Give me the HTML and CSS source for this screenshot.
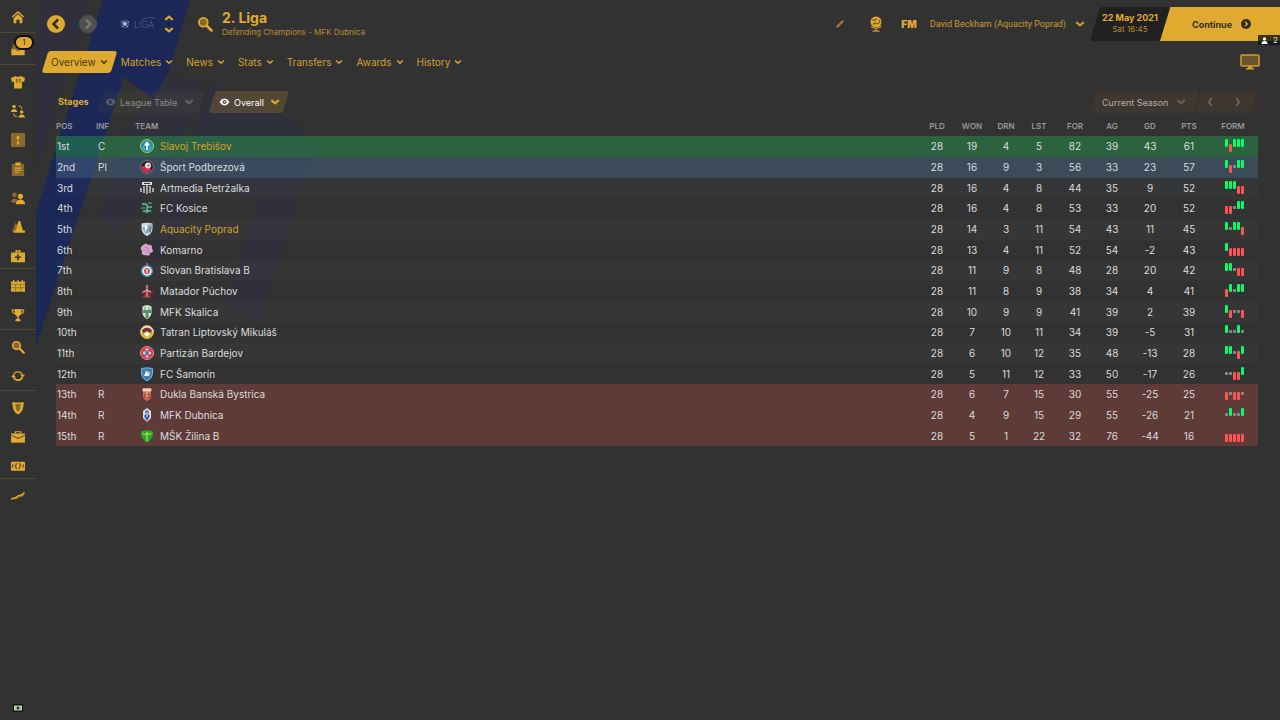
FILE: index.html
```html
<!DOCTYPE html>
<html lang="en">
<head>
    <meta charset="UTF-8">
    <meta name="viewport" content="width=device-width, initial-scale=1.0">
    <title>2. Liga - Overview</title>
    <link rel="stylesheet" href="styles.css">
</head>
<body>
    <!-- club colours behind the page -->
    <svg class="backdrop" width="420" height="360" aria-hidden="true">
        <path class="faint" d="M45 0h45L36 170V40zM172 75l36 10-40 85-50 62-20-14 30-95zM210 82l90 42 14 26-56 176-34-22 40-118-16 14-44-22-28 60-30 32 40-122z"/>
        <path class="band" d="M103 0h87l-22 73-15 26-29-22L36 346V212z"/>
    </svg>

    <!-- shared icons -->
    <svg class="sprite" aria-hidden="true">
        <symbol id="search" viewBox="0 0 16 16"><circle cx="6.300" cy="6.300" r="4.400" fill="#8a682c" stroke="#e0aa30" stroke-width="1.800"/><path d="M10 10l4.500 4.500" stroke="#e0aa30" stroke-width="2.600" stroke-linecap="round"/></symbol>
        <symbol id="down" viewBox="0 0 8 6"><path d="M1 1.500l3 2.600 3-2.600" fill="none" stroke="currentColor" stroke-width="1.600"/></symbol>
        <symbol id="eye" viewBox="0 0 12 8"><path fill-rule="evenodd" d="M0.500 4Q3 .2 6 .2T11.500 4Q9 7.800 6 7.800T.500 4zM6 1.900a2.100 2.100 0 1 0 .01 0z" fill="currentColor"/><circle cx="6" cy="4" r=".8" fill="currentColor"/></symbol>
    </svg>

    <nav class="sidebar" aria-label="Main">
        <div class="group">
            <a href="#" aria-label="Home"><svg viewBox="0 0 16 16"><path d="M8 1l7 6.300-1.200 1.300L8 3.500 2.200 8.600 1 7.300z"/><path d="M3 9.200l5-4.400 5 4.400V15H9.800v-4H6.200v4H3z"/></svg></a>
        </div>
        <div class="group tall">
            <a href="#" aria-label="Inbox"><svg viewBox="0 0 16 16"><path d="M3 1h10l2.500 6v6H.5V7z" class="dim"/><path d="M.5 7H5l1.500 2h3L11 7h4.500v7H.5z"/></svg><span class="badge">1</span></a>
        </div>
        <div class="group">
            <a href="#" aria-label="Squad"><svg viewBox="0 0 16 16"><path d="M5 1q3 2 6 0l5 2.500-1 4.500-2.500-.5V15.500h-9V7.500L1 8 0 3.500z"/><path d="M5.500 5.500l1.200-.8V9M9 5.500l1.200-.8V9" fill="none" stroke="#4a3c20"/></svg></a>
            <a href="#" aria-label="Dynamics"><svg viewBox="0 0 16 16"><circle cx="3.500" cy="2.800" r="2"/><path d="M0 9c0-4.500 7-4.500 7 0z"/><circle cx="12.200" cy="9" r="2"/><path d="M8.500 15.500c0-4.500 7.500-4.500 7.500 0z"/><path d="M8.500 2q4 .3 4 4M3 10.500q0 3.500 4 4" fill="none" stroke="#a47c2d" stroke-width="1.600"/></svg></a>
            <a href="#" aria-label="Tactics"><svg viewBox="0 0 16 16"><rect x="0" y="0" width="16" height="16" rx="1" class="dim"/><path d="M8 2.500L10.500 6H9v2H7V6H5.500zM7 9.500h2.200v3.500H7z"/></svg></a>
            <a href="#" aria-label="Team report"><svg viewBox="0 0 16 16"><rect x="1" y="2" width="14" height="14" rx="1" class="dim"/><path d="M5 .5h6V4H5z"/><path d="M4 7h8M4 9.500h8M4 12h5" stroke="#e0aa30" stroke-width="1.200"/></svg></a>
            <a href="#" aria-label="Staff"><svg viewBox="0 0 16 16"><g class="dim"><circle cx="4" cy="4.500" r="2.800"/><path d="M0 13c0-6 8-6 8 0z"/></g><circle cx="10.800" cy="6" r="3"/><path d="M5.500 15c0-7 10.500-7 10.500 0z"/></svg></a>
            <a href="#" aria-label="Training"><svg viewBox="0 0 16 16"><path d="M1 14L5 3l3 3-2 8z" class="dim"/><path d="M8.500 1h2L13.500 12H16v2.500H3.500V12H5.500z"/></svg></a>
            <a href="#" aria-label="Medical centre"><svg viewBox="0 0 16 16"><path fill-rule="evenodd" d="M5 4V1.500h6V4h5v11H0V4zM6.500 4h3V3h-3z"/><path d="M8 6v7M4.500 9.500h7" stroke="#3a3220" stroke-width="1.800"/></svg></a>
        </div>
        <div class="group tall">
            <a href="#" aria-label="Schedule"><svg viewBox="0 0 16 16"><path d="M0 3h16v11.500H0z"/><path d="M3 1v3M8 1v3M13 1v3" stroke="#e0aa30" stroke-width="1.500"/><path d="M0 6h16M0 10h16M5 6v8M11 6v8" stroke="#8c6d2d"/></svg></a>
            <a href="#" aria-label="Competitions"><svg viewBox="0 0 16 16"><path d="M4 1h8c0 5-1 8-3.200 8.600V12L11 13.500V15H5v-1.500L7.200 12V9.600C5 9 4 6 4 1z"/><path d="M4 2.500H1.500q0 4 4 4M12 2.500h2.500q0 4-4 4" fill="none" stroke="#e0aa30" stroke-width="1.300"/></svg></a>
        </div>
        <div class="group tall">
            <a href="#" aria-label="Scouting"><svg><use href="#search"/></svg></a>
            <a href="#" aria-label="Transfers"><svg viewBox="0 0 16 16"><path d="M3 6.500a5.300 5.300 0 0 1 10 .5" fill="none" stroke="#b1842e" stroke-width="2"/><path d="M13 9.500a5.300 5.300 0 0 1-10-.5" fill="none" stroke="#e0aa30" stroke-width="2"/><path d="M10.500 6.500h5.500L13.200 10zM0 9.500h5.500L2.800 6z"/></svg></a>
        </div>
        <div class="group">
            <a href="#" aria-label="Club"><svg viewBox="0 0 16 16"><path d="M1.500 1Q8 2.500 14.500 1q.5 10.500-6.500 14.500Q1 11.500 1.500 1z"/><path d="M5 3.500h6q0 6-3 9-3-3-3-9z" fill="#8a682c"/></svg></a>
            <a href="#" aria-label="Club vision"><svg viewBox="0 0 16 16"><path d="M5 4V2h6v2" fill="none" stroke="#e0aa30" stroke-width="1.400"/><path d="M0 4h16v10.500H0z"/><path d="M0 6l8 3.500L16 6" fill="none" stroke="#6b532a" stroke-width="1.200"/></svg></a>
            <a href="#" aria-label="Finances"><svg viewBox="0 0 16 16"><rect x="0" y="3" width="16" height="10.500" rx="1"/><path d="M6.500 5L5 8l1.500 3.500M9 4.500l2 3-2 4M2 6v4M14 6v4" fill="none" stroke="#5c4826" stroke-width="1.300"/></svg></a>
        </div>
        <div class="group last">
            <a href="#" aria-label="Dev centre"><svg viewBox="0 0 16 16"><path d="M0 11l5-1 3-3 7-2v3l-6 2-3 2z" class="dim"/><path d="M0 11.500l5-1.500 3.500-2.500 3-.3L15.500 4" fill="none" stroke="#e0aa30" stroke-width="1.600"/></svg></a>
        </div>
        <svg class="camera" viewBox="0 0 10 8"><rect width="10" height="8" rx="1" fill="#12180f"/><rect x="1" y="1.500" width="8" height="5" fill="#b8cfae"/><circle cx="5" cy="4" r="1.500" fill="#29351f"/></svg>
    </nav>

    <div class="page">
        <header class="topbar">
            <button class="round" aria-label="Back"><svg viewBox="0 0 18 18"><circle cx="9" cy="9" r="9" fill="#e0aa30"/><path d="M11 4.500L6.500 9l4.500 4.500" fill="none" stroke="#32302a" stroke-width="2.600"/></svg></button>
            <button class="round forward" aria-label="Forward"><svg viewBox="0 0 18 18"><circle cx="9" cy="9" r="9" fill="#505050"/><path d="M7 4.500L11.500 9 7 13.500" fill="none" stroke="#7c7c7c" stroke-width="2.200"/></svg></button>
            <div class="league-logo">
                <svg class="ball" viewBox="0 0 10 10"><circle cx="5" cy="5" r="4.500" fill="#34496f"/><path d="M4.500 3l2 1-.5 2.200H4L3 4.300zM1.500 2l1 1M8 2l.5 1.500M2 7l1 1M7 8l1-1" fill="#aab6ca" stroke="#aab6ca"/></svg>
                <span>LIGA</span>
                <svg class="swoosh" viewBox="0 0 16 6"><path d="M1 5Q7 0 15 2" fill="none" stroke="#3d4f78"/></svg>
            </div>
            <div class="switcher">
                <button aria-label="Previous competition"><svg class="chevron wide up"><use href="#down"/></svg></button>
                <button aria-label="Next competition"><svg class="chevron wide"><use href="#down"/></svg></button>
            </div>
            <button class="find" aria-label="Search"><svg><use href="#search"/></svg></button>
            <div class="heading">
                <h1>2. Liga</h1>
                <p>Defending Champions - MFK Dubnica</p>
            </div>
            <button class="edit" aria-label="Edit"><svg viewBox="0 0 10 10"><path d="M1 9l.8-2.500L7.500 1 9 2.500 3.300 8.200z" fill="#a37a2e"/></svg></button>
            <button class="world" aria-label="World"><svg viewBox="0 0 14 16"><circle cx="7" cy="6" r="5.500" fill="#e0aa30"/><path d="M3 3.500l2.500 1L8 2.500M4 8.500l2-1.500 1.500 1 3.500-1.500-1-2.500" fill="none" stroke="#705724" stroke-width="1.100"/><path d="M2 10.500q5 4 10.500-.5M7 12v2.500M3.500 15h7" fill="none" stroke="#c0902f" stroke-width="1.300"/></svg></button>
            <a class="fm" href="#">FM</a>
            <button class="manager">David Beckham (Aquacity Poprad) <svg class="chevron wide"><use href="#down"/></svg></button>
            <div class="date"><strong>22 May 2021</strong><span>Sat 16:45</span></div>
            <button class="continue">Continue <svg viewBox="0 0 10 10"><circle cx="5" cy="5" r="5" fill="#302d27"/><path d="M4 2.700L6.300 5 4 7.300" fill="none" stroke="#e0aa30" stroke-width="1.300"/></svg></button>
            <span class="online"><svg viewBox="0 0 8 8"><circle cx="4" cy="2.200" r="1.900"/><path d="M.5 8q0-3.500 3.500-3.500T7.500 8z"/></svg>2</span>
        </header>

        <div class="tabs">
            <button class="tab active">Overview <svg class="chevron"><use href="#down"/></svg></button>
            <button class="tab">Matches <svg class="chevron"><use href="#down"/></svg></button>
            <button class="tab">News <svg class="chevron"><use href="#down"/></svg></button>
            <button class="tab">Stats <svg class="chevron"><use href="#down"/></svg></button>
            <button class="tab">Transfers <svg class="chevron"><use href="#down"/></svg></button>
            <button class="tab">Awards <svg class="chevron"><use href="#down"/></svg></button>
            <button class="tab">History <svg class="chevron"><use href="#down"/></svg></button>
            <button class="screen" aria-label="Screen view"><svg viewBox="0 0 20 16"><rect x="1" y="1" width="18" height="11" rx="1" fill="#69542d" stroke="#cf9d2f" stroke-width="1.500"/><path d="M8 12h4v2h2v1.500H6V14h2z" fill="#cf9d2f"/></svg></button>
        </div>

        <main class="content">
            <div class="filters">
                <span class="stages">Stages</span>
                <label class="pill muted">
                    <svg class="eye"><use href="#eye"/></svg>
                    <select class="view" aria-label="Stage"><option>League Table</option></select>
                    <svg class="chevron wide"><use href="#down"/></svg>
                </label>
                <label class="pill overall">
                    <svg class="eye"><use href="#eye"/></svg>
                    <select class="scope" aria-label="Scope"><option>Overall</option></select>
                    <svg class="chevron wide"><use href="#down"/></svg>
                </label>
                <label class="pill season">
                    <select aria-label="Season"><option>Current Season</option></select>
                    <svg class="chevron wide"><use href="#down"/></svg>
                </label>
                <div class="pill pager">
                    <button aria-label="Previous season"><svg class="chevron wide left"><use href="#down"/></svg></button>
                    <button aria-label="Next season"><svg class="chevron wide right"><use href="#down"/></svg></button>
                </div>
            </div>

            <table class="league">
                <colgroup>
                    <col class="w40"><col class="w38"><col>
                    <col class="w34"><col class="w36"><col class="w32"><col class="w34"><col class="w38">
                    <col class="w36"><col class="w40"><col class="w38"><col class="w50">
                </colgroup>
                <thead>
                    <tr><th>POS</th><th>INF</th><th>TEAM</th><th>PLD</th><th>WON</th><th>DRN</th><th>LST</th><th>FOR</th><th>AG</th><th>GD</th><th>PTS</th><th>FORM</th></tr>
                </thead>
                <tbody id="rows"></tbody>
            </table>
        </main>
    </div>

    <script src="script.js"></script>
</body>
</html>
```

FILE: styles.css
```css
* {
    box-sizing: border-box;
}
body {
    margin: 0;
    min-height: 100vh;
    display: flex;
    background: #323232;
    color: #dcdcdc;
    font-family: Inter, Roboto, sans-serif;
    font-size: 10px;
}
a {
    color: inherit;
    text-decoration: none;
}
button, select {
    font: inherit;
    color: inherit;
    background: none;
    border: none;
    padding: 0;
    cursor: pointer;
}
button, label {
    display: flex;
    align-items: center;
}
svg {
    display: block;
    flex: none;
}
.sprite {
    position: absolute;
    width: 0;
    height: 0;
}
.backdrop {
    position: absolute;
    top: 0;
    left: 0;
    z-index: -1;
}
.band { fill: #1a2757; }
.faint { fill: #2f303b; }

/* sidebar */
.sidebar {
    width: 36px;
    flex: none;
    display: flex;
    flex-direction: column;
    background: #323232;
}
.group {
    border-bottom: 1px solid #51482f;
}
.group a {
    display: flex;
    align-items: center;
    justify-content: center;
    height: 29px;
    padding-top: 4px;
    position: relative;
}
.group:first-child {
    padding-bottom: 3px;
}
.group.tall { padding-bottom: 2px; }
.group.last { border: none; }
.group svg {
    width: 14px;
    height: 14px;
    fill: #e0aa30;
}
.group .dim { fill: #8a682c; }
.badge {
    position: absolute;
    top: 2px;
    left: 14px;
    width: 20px;
    height: 15px;
    border: 2px solid #111;
    border-radius: 8px;
    background: #e0aa30;
    color: #32302a;
    font-size: 8px;
    line-height: 11px;
    text-align: center;
}
.camera {
    width: 10px;
    height: 8px;
    margin: auto 13px 8px;
}

/* top bar */
.page {
    flex: 1;
    min-width: 0;
}
.topbar {
    display: flex;
    align-items: center;
    height: 48px;
    padding-left: 11px;
    color: #e0aa30;
    position: relative;
    overflow: hidden;
}
.round svg {
    width: 18px;
    height: 18px;
}
.forward {
    margin-left: 14px;
}
.league-logo {
    display: flex;
    align-items: center;
    gap: 4px;
    width: 38px;
    margin-left: 23px;
    color: #42547e;
    font-size: 9px;
    position: relative;
}
.ball {
    width: 10px;
    height: 10px;
}
.swoosh {
    position: absolute;
    top: -3px;
    left: 20px;
    width: 16px;
    height: 6px;
}
.switcher {
    display: grid;
    gap: 4px;
    margin-left: 6px;
}
.chevron {
    width: 8px;
    height: 6px;
}
.chevron.wide {
    width: 10px;
    height: 8px;
}
.up { transform: rotate(180deg); }
.left { transform: rotate(90deg); }
.right { transform: rotate(-90deg); }
.find {
    margin-left: 23px;
}
.find svg {
    width: 16px;
    height: 16px;
}
.heading {
    flex: 1;
    margin-left: 9px;
    min-width: 0;
}
h1 {
    margin: 0;
    font-size: 14px;
    line-height: 16px;
}
.heading p {
    margin: 0;
    font-size: 8px;
    line-height: 12px;
    color: #b98c2f;
}
.edit svg {
    width: 10px;
    height: 10px;
}
.world {
    margin-left: 24px;
}
.world svg {
    width: 14px;
    height: 16px;
}
.fm {
    margin-left: 18px;
    font-weight: 900;
}
.manager {
    gap: 9px;
    margin-left: 13px;
    font-family: Roboto, sans-serif;
    font-size: 9px;
    color: #cb9a2f;
}
.date, .continue, .pill, .tab {
    position: relative;
    isolation: isolate;
}
.date::before, .continue::before, .pill::before, .active::before {
    content: "";
    position: absolute;
    inset: 0;
    z-index: -1;
    transform: skewX(-17deg);
    border-radius: 3px;
}
.date {
    width: 70px;
    height: 34px;
    margin-left: 10px;
    padding-top: 4px;
    text-align: center;
    font-size: 9px;
    line-height: 13px;
}
.date::before {
    background: #202020;
}
.date span {
    display: block;
    font-size: 8px;
    line-height: 10px;
    color: #b98c2f;
}
.continue {
    width: 120px;
    height: 34px;
    margin-left: -5px;
    padding-left: 32px;
    gap: 9px;
    font-size: 9px;
    font-weight: 700;
    color: #32302a;
}
.continue::before {
    background: #e0aa30;
    transform-origin: bottom;
    border-radius: 0;
}
.continue svg {
    width: 10px;
    height: 10px;
}
.online {
    position: absolute;
    right: 0;
    top: 35px;
    display: flex;
    align-items: center;
    gap: 5px;
    width: 22px;
    height: 10px;
    padding-left: 3px;
    background: rgba(20, 20, 20, .8);
    color: #ddd;
    font-size: 8px;
}
.online svg {
    width: 7px;
    height: 7px;
    fill: #fff;
}

/* tabs */
.tabs {
    display: flex;
    align-items: center;
    gap: 13px;
    height: 28px;
    padding: 0 20px 0 9px;
    color: #d3a02f;
}
.tab {
    gap: 4px;
    height: 22px;
}
.active {
    padding: 0 6px;
    margin-right: -6px;
    color: #4a3b1c;
}
.active::before {
    background: #e0aa30;
}
.screen {
    margin-left: auto;
}
.screen svg {
    width: 20px;
    height: 16px;
}

/* filters */
.content {
    padding: 15px 22px 0 20px;
}
.filters {
    display: flex;
    height: 22px;
    padding: 0 4px 0 2px;
}
.stages {
    width: 42px;
    font-size: 9px;
    font-weight: 700;
    line-height: 22px;
    color: #e0aa30;
}
.pill {
    gap: 4px;
    padding: 0 5px;
    font-size: 9px;
    color: #fff;
}
.pill::before {
    background: rgba(224, 160, 48, .2);
}
.pill select {
    appearance: none;
}
.pill .chevron {
    color: #e0aa30;
}
.eye {
    width: 11px;
    height: 8px;
}
.muted {
    width: 102px;
    margin-right: 10px;
    color: #8d8d8d;
}
.muted::before {
    background: rgba(224, 180, 100, .05);
}
.overall {
    width: 74px;
    padding-left: 7px;
}
.muted .eye, .muted .chevron, .season .chevron, .pager .chevron {
    color: #626262;
}
.view { width: 60px; }
.scope { width: 32px; }
.season {
    width: 102px;
    margin-left: auto;
    padding: 0 10px 0 8px;
    justify-content: space-between;
    color: #b0b0b0;
}
.season::before, .pager::before {
    background: #3d3730;
}
.pager {
    display: flex;
    align-items: center;
    gap: 18px;
    width: 56px;
    margin-left: 2px;
    padding-left: 7px;
}

/* league table */
.league {
    width: 100%;
    table-layout: fixed;
    border-collapse: collapse;
}
.w32 { width: 32px; }
.w34 { width: 34px; }
.w36 { width: 36px; }
.w38 { width: 38px; }
.w40 { width: 40px; }
.w50 { width: 50px; }
.league th {
    height: 23px;
    padding: 2px 0 0;
    font-size: 8px;
    font-weight: 600;
    color: #999;
}
.league td {
    height: 21px;
    padding: 0 0 1px;
    line-height: 18px;
    text-align: center;
}
.league tr:nth-child(3n) td {
    height: 20px;
}
.league tr > :nth-child(-n+3) {
    text-align: left;
}
.league td:first-child {
    padding-left: 1px;
}
.league td:nth-child(2) {
    padding-left: 2px;
}
.league th:nth-child(3) {
    padding-left: 1px;
}
.league tbody tr:nth-child(odd) { background: rgba(255, 255, 255, .02); }
.league tbody tr.champion { background: rgba(40, 146, 78, .5); }
.league tbody tr.playoff { background: rgba(70, 100, 130, .5); }
.league tbody tr.relegated { background: rgba(138, 66, 62, .5); }
.team {
    display: flex;
    align-items: center;
    gap: 6px;
    padding-left: 6px;
}
.team svg {
    width: 14px;
    height: 14px;
}
.own { color: #d5a02f; }
.form {
    display: flex;
    gap: 1px;
    height: 14px;
    margin-left: 17px;
}
.form i {
    width: 3px;
    height: 8px;
    border-radius: 1px;
}
.form .W { background: #00ff68; }
.form .L {
    background: #ff5454;
    margin-top: 5px;
}
.form .D {
    height: 3px;
    background: #8c8c8c;
    margin-top: 5px;
}
```

FILE: script.js
```js
// club crests, drawn on a 14x14 grid
const shield = 'M1.500 1.500Q7 0 12.500 1.500V7Q12 11.500 7 14 2 11.500 1.500 7z'
const crests = {
    trebisov: '<circle cx="7" cy="7" r="6.500" fill="#238fb5" stroke="#c2c83e"/><path d="M7 2l3 4-2 1v4H6V7L4 6z" fill="#dff5f5"/><path d="M3 8l2 3M11 8l-2 3" stroke="#69d5c0"/>',
    podbrezova: '<circle cx="7" cy="7" r="6.500" fill="#25262c" stroke="#777"/><path d="M1 7l5-2 6 5-4 3-5-1z" fill="#c52f50"/><circle cx="8" cy="5.500" r="3" fill="#e5dfe2"/><circle cx="8.500" cy="5.500" r="1" fill="#a55"/>',
    artmedia: '<path d="M2 1h10v3H2z" fill="#ddd"/><path d="M1 7v4M4 5v7M7 4v9M10 5v7M13 7v4" stroke="#ccc" stroke-width="1.500"/><path d="M4 2.500h6" stroke="#333"/>',
    kosice: '<path d="M1 1h12v12H1z" fill="#1e443e"/><path d="M2 3h4l2 3h4M7 6v6M3 10h8" fill="none" stroke="#7fae8e" stroke-width="1.600"/><path d="M8 2h4M1 7h4" stroke="#b09460"/>',
    poprad: `<path d="${shield}" fill="#d3dce2"/><path d="M2 5l4 1 2-3 4-1-2 6-4 4-3-4z" fill="#8fa6ba"/><path d="M5 3l3 2-3 5z" fill="#f6f8ed"/><path d="M10 5l2-1-1 5-3 3z" fill="#5f7d9b"/>`,
    komarno: '<path d="M3 2q4-3 5 0 5-1 4 4 3 3-2 4 0 4-4 2-5 1-4-4-3-3 1-6z" fill="#d6a3cf"/><path d="M5 4l4 2-3 4M9 8l1 2M3 7h3" fill="none" stroke="#b07fae"/>',
    slovan: '<path d="M7 0v3" stroke="#cf3b43" stroke-width="2"/><circle cx="7" cy="8" r="5.300" fill="#e8eef0" stroke="#469fb0" stroke-width="1.400"/><circle cx="7" cy="8" r="3" fill="#d24b56"/><path d="M7 6v4" stroke="#fff"/>',
    matador: '<path d="M7 0l2 3-1 2 5 3v2L9 9l2.500 5h-9L5 9l-4 1V8l5-3-1-2z" fill="#98303c"/><path d="M7 1v12M3 8l4-2 4 2" fill="none" stroke="#dfb9ac"/>',
    skalica: '<path d="M2.500 1.500Q7-1 11.500 1.500V8Q11 12 7 14 3 12 2.500 8z" fill="#d9e5d9"/><path d="M3 5h8v3H8.500v5h-3V8H3z" fill="#4d936b"/><path d="M5 2v3M9 2v3" stroke="#5b9577"/>',
    tatran: '<circle cx="7" cy="7" r="6.500" fill="#f0e9dc" stroke="#cfb62e"/><path d="M1 8q6-7 12 0-1 5-6 5.500Q2 13 1 8z" fill="#d4b72d"/><path d="M2 5q5-5 10 0L11 8 7 6 3 8z" fill="#802b36"/><path d="M4 9l3-2 3 2-3 3z" fill="#fff"/>',
    partizan: '<circle cx="7" cy="7" r="6.500" fill="#d63b4c" stroke="#e88d92"/><path d="M7 2.500v9M3 7h8" stroke="#ddd" stroke-width="2.600"/><path d="M7 4v6M5 7h4" stroke="#446b9a" stroke-width="1.500"/>',
    samorin: `<path d="${shield}" fill="#3e80b4" stroke="#7fb2d6"/><path d="M4 9l2-5h2L7 6l3-1-1 4z" fill="#e8f4fb"/>`,
    dukla: '<path d="M3 1h8v9q-1 3-4 4-3-1-4-4z" fill="#cf6750"/><path d="M3 2h8v2H3zM4 6h6M5 9h4" fill="#ecd7b1" stroke="#ecd7b1"/><path d="M5 5v6M9 5v6" stroke="#9b3c36"/>',
    dubnica: '<path d="M7 0l4 3v7l-4 4-4-4V3z" fill="#d5dce8"/><path d="M7 2l2 2-1 2 2 2-3 5-3-5 2-2-1-2z" fill="#385a91"/><path d="M7 4v5" stroke="#fff"/>',
    zilina: '<path d="M1 2.500Q7 0 13 2.500v4Q11 11 7 14 3 11 1 6.500z" fill="#24a532"/><path d="M7 3v9M3 4q2 3 4 0 2 3 4 0" fill="none" stroke="#b5dc3d" stroke-width="1.300"/>'
}

// pos, inf, crest, team, pld, won, drn, lst, for, ag, gd, pts, form
const table = [
    ['1st', 'C', 'trebisov', 'Slavoj Trebišov', 28, 19, 4, 5, 82, 39, 43, 61, 'WLWWW'],
    ['2nd', 'Pl', 'podbrezova', 'Šport Podbrezová', 28, 16, 9, 3, 56, 33, 23, 57, 'WLDWW'],
    ['3rd', '', 'artmedia', 'Artmedia Petržalka', 28, 16, 4, 8, 44, 35, 9, 52, 'WWWLL'],
    ['4th', '', 'kosice', 'FC Kosice', 28, 16, 4, 8, 53, 33, 20, 52, 'LLDWW'],
    ['5th', '', 'poprad', 'Aquacity Poprad', 28, 14, 3, 11, 54, 43, 11, 45, 'WDWWL'],
    ['6th', '', 'komarno', 'Komarno', 28, 13, 4, 11, 52, 54, -2, 43, 'WLLLL'],
    ['7th', '', 'slovan', 'Slovan Bratislava B', 28, 11, 9, 8, 48, 28, 20, 42, 'WWDLL'],
    ['8th', '', 'matador', 'Matador Púchov', 28, 11, 8, 9, 38, 34, 4, 41, 'LWDWW'],
    ['9th', '', 'skalica', 'MFK Skalica', 28, 10, 9, 9, 41, 39, 2, 39, 'WLDDL'],
    ['10th', '', 'tatran', 'Tatran Liptovský Mikuláš', 28, 7, 10, 11, 34, 39, -5, 31, 'WDDWD'],
    ['11th', '', 'partizan', 'Partizán Bardejov', 28, 6, 10, 12, 35, 48, -13, 28, 'WWDLW'],
    ['12th', '', 'samorin', 'FC Šamorín', 28, 5, 11, 12, 33, 50, -17, 26, 'DDLLW'],
    ['13th', 'R', 'dukla', 'Dukla Banská Bystrica', 28, 6, 7, 15, 30, 55, -25, 25, 'LDLLD'],
    ['14th', 'R', 'dubnica', 'MFK Dubnica', 28, 4, 9, 15, 29, 55, -26, 21, 'DWDDW'],
    ['15th', 'R', 'zilina', 'MŠK Žilina B', 28, 5, 1, 22, 32, 76, -44, 16, 'LLLLL']
]

const rowClass = { C: 'champion', Pl: 'playoff', R: 'relegated' }
const highlighted = ['Slavoj Trebišov', 'Aquacity Poprad']

document.getElementById('rows').innerHTML = table.map(([pos, inf, crest, team, ...rest]) => {
    const form = rest.pop()
    return `
        <tr class="${rowClass[inf] || ''}">
            <td>${pos}</td>
            <td>${inf}</td>
            <td><div class="team"><svg viewBox="0 0 14 14">${crests[crest]}</svg><span class="${highlighted.includes(team) ? 'own' : ''}">${team}</span></div></td>
            ${rest.map(n => `<td>${n}</td>`).join('')}
            <td><div class="form">${[...form].map(r => `<i class="${r}"></i>`).join('')}</div></td>
        </tr>
    `
}).join('')
```
